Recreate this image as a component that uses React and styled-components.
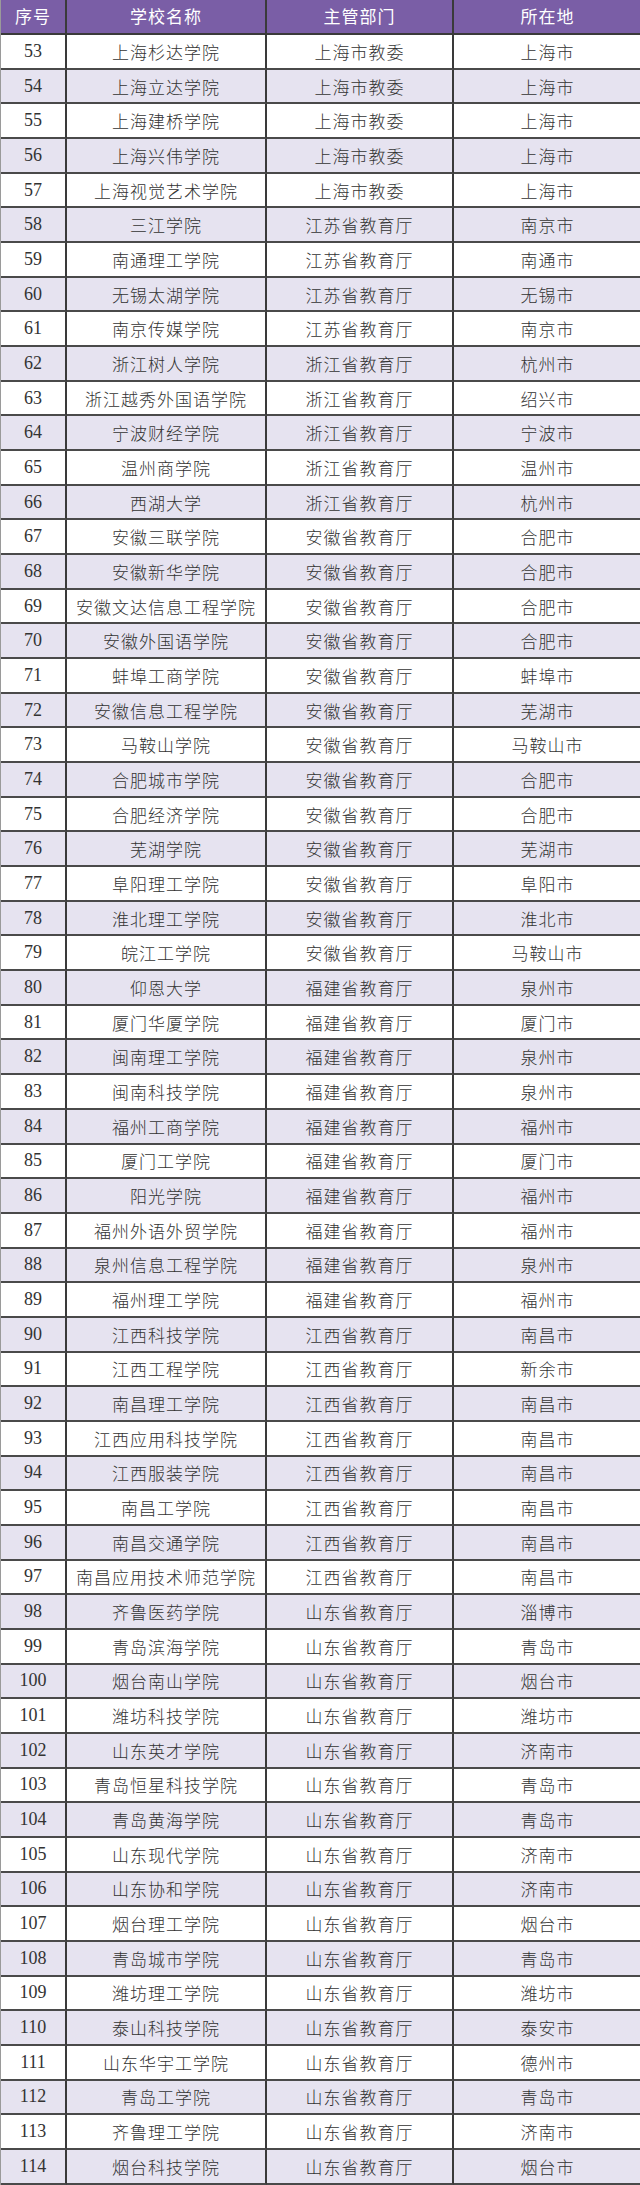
import React from "react";
import styled, { createGlobalStyle } from "styled-components";

const GlobalStyle = createGlobalStyle`
  html, body {
    margin: 0;
    padding: 0;
    background: #ffffff;
  }
  body {
    width: 640px;
    height: 2185px;
    overflow: hidden;
  }
`;

const rows = [
  ["53", "上海杉达学院", "上海市教委", "上海市"],
  ["54", "上海立达学院", "上海市教委", "上海市"],
  ["55", "上海建桥学院", "上海市教委", "上海市"],
  ["56", "上海兴伟学院", "上海市教委", "上海市"],
  ["57", "上海视觉艺术学院", "上海市教委", "上海市"],
  ["58", "三江学院", "江苏省教育厅", "南京市"],
  ["59", "南通理工学院", "江苏省教育厅", "南通市"],
  ["60", "无锡太湖学院", "江苏省教育厅", "无锡市"],
  ["61", "南京传媒学院", "江苏省教育厅", "南京市"],
  ["62", "浙江树人学院", "浙江省教育厅", "杭州市"],
  ["63", "浙江越秀外国语学院", "浙江省教育厅", "绍兴市"],
  ["64", "宁波财经学院", "浙江省教育厅", "宁波市"],
  ["65", "温州商学院", "浙江省教育厅", "温州市"],
  ["66", "西湖大学", "浙江省教育厅", "杭州市"],
  ["67", "安徽三联学院", "安徽省教育厅", "合肥市"],
  ["68", "安徽新华学院", "安徽省教育厅", "合肥市"],
  ["69", "安徽文达信息工程学院", "安徽省教育厅", "合肥市"],
  ["70", "安徽外国语学院", "安徽省教育厅", "合肥市"],
  ["71", "蚌埠工商学院", "安徽省教育厅", "蚌埠市"],
  ["72", "安徽信息工程学院", "安徽省教育厅", "芜湖市"],
  ["73", "马鞍山学院", "安徽省教育厅", "马鞍山市"],
  ["74", "合肥城市学院", "安徽省教育厅", "合肥市"],
  ["75", "合肥经济学院", "安徽省教育厅", "合肥市"],
  ["76", "芜湖学院", "安徽省教育厅", "芜湖市"],
  ["77", "阜阳理工学院", "安徽省教育厅", "阜阳市"],
  ["78", "淮北理工学院", "安徽省教育厅", "淮北市"],
  ["79", "皖江工学院", "安徽省教育厅", "马鞍山市"],
  ["80", "仰恩大学", "福建省教育厅", "泉州市"],
  ["81", "厦门华厦学院", "福建省教育厅", "厦门市"],
  ["82", "闽南理工学院", "福建省教育厅", "泉州市"],
  ["83", "闽南科技学院", "福建省教育厅", "泉州市"],
  ["84", "福州工商学院", "福建省教育厅", "福州市"],
  ["85", "厦门工学院", "福建省教育厅", "厦门市"],
  ["86", "阳光学院", "福建省教育厅", "福州市"],
  ["87", "福州外语外贸学院", "福建省教育厅", "福州市"],
  ["88", "泉州信息工程学院", "福建省教育厅", "泉州市"],
  ["89", "福州理工学院", "福建省教育厅", "福州市"],
  ["90", "江西科技学院", "江西省教育厅", "南昌市"],
  ["91", "江西工程学院", "江西省教育厅", "新余市"],
  ["92", "南昌理工学院", "江西省教育厅", "南昌市"],
  ["93", "江西应用科技学院", "江西省教育厅", "南昌市"],
  ["94", "江西服装学院", "江西省教育厅", "南昌市"],
  ["95", "南昌工学院", "江西省教育厅", "南昌市"],
  ["96", "南昌交通学院", "江西省教育厅", "南昌市"],
  ["97", "南昌应用技术师范学院", "江西省教育厅", "南昌市"],
  ["98", "齐鲁医药学院", "山东省教育厅", "淄博市"],
  ["99", "青岛滨海学院", "山东省教育厅", "青岛市"],
  ["100", "烟台南山学院", "山东省教育厅", "烟台市"],
  ["101", "潍坊科技学院", "山东省教育厅", "潍坊市"],
  ["102", "山东英才学院", "山东省教育厅", "济南市"],
  ["103", "青岛恒星科技学院", "山东省教育厅", "青岛市"],
  ["104", "青岛黄海学院", "山东省教育厅", "青岛市"],
  ["105", "山东现代学院", "山东省教育厅", "济南市"],
  ["106", "山东协和学院", "山东省教育厅", "济南市"],
  ["107", "烟台理工学院", "山东省教育厅", "烟台市"],
  ["108", "青岛城市学院", "山东省教育厅", "青岛市"],
  ["109", "潍坊理工学院", "山东省教育厅", "潍坊市"],
  ["110", "泰山科技学院", "山东省教育厅", "泰安市"],
  ["111", "山东华宇工学院", "山东省教育厅", "德州市"],
  ["112", "青岛工学院", "山东省教育厅", "青岛市"],
  ["113", "齐鲁理工学院", "山东省教育厅", "济南市"],
  ["114", "烟台科技学院", "山东省教育厅", "烟台市"],
];

const Table = styled.div`
  display: grid;
  grid-template-columns: 66px 200px 187px 187px;
  grid-template-rows: 35px;
  grid-auto-rows: 34.68px;
  width: 640px;
  box-sizing: border-box;
  border-left: 1px solid #9a9a9a;
  border-right: 2px solid #3c3c3c;
`;

const HeaderCell = styled.div`
  display: flex;
  align-items: center;
  justify-content: center;
  background: #7a5ea6;
  color: #ffffff;
  font-family: "Noto Sans CJK SC", "Noto Sans", sans-serif;
  font-size: 17px;
  letter-spacing: 1px;
  border-bottom: 2px solid #3a3a3a;
  border-right: ${(p) => (p.$last ? "none" : "2px solid #3a3a3a")};
  box-sizing: border-box;
  padding-bottom: 2px;
`;

const Cell = styled.div`
  display: flex;
  align-items: center;
  justify-content: center;
  background: ${(p) => (p.$alt ? "#e6e3f0" : "#ffffff")};
  color: #333333;
  font-family: ${(p) =>
    p.$num
      ? `"Liberation Serif", "Times New Roman", serif`
      : `"Noto Sans CJK SC", "Noto Sans", sans-serif`};
  font-size: ${(p) => (p.$num ? "18px" : "17px")};
  font-weight: ${(p) => (p.$num ? 400 : 300)};
  letter-spacing: ${(p) => (p.$num ? "0" : "1px")};
  border-bottom: 2px solid #4a4a4a;
  border-right: ${(p) => (p.$last ? "none" : "2px solid #3a3a3a")};
  box-sizing: border-box;
  white-space: nowrap;
`;

const App = () => {
  return (
    <>
      <GlobalStyle />
      <Table>
        <HeaderCell>序号</HeaderCell>
        <HeaderCell>学校名称</HeaderCell>
        <HeaderCell>主管部门</HeaderCell>
        <HeaderCell $last>所在地</HeaderCell>
        {rows.map((r, i) => {
          const alt = i % 2 === 1;
          return (
            <React.Fragment key={r[0]}>
              <Cell $alt={alt} $num>
                {r[0]}
              </Cell>
              <Cell $alt={alt}>{r[1]}</Cell>
              <Cell $alt={alt}>{r[2]}</Cell>
              <Cell $alt={alt} $last>
                {r[3]}
              </Cell>
            </React.Fragment>
          );
        })}
      </Table>
    </>
  );
};

export default App;
